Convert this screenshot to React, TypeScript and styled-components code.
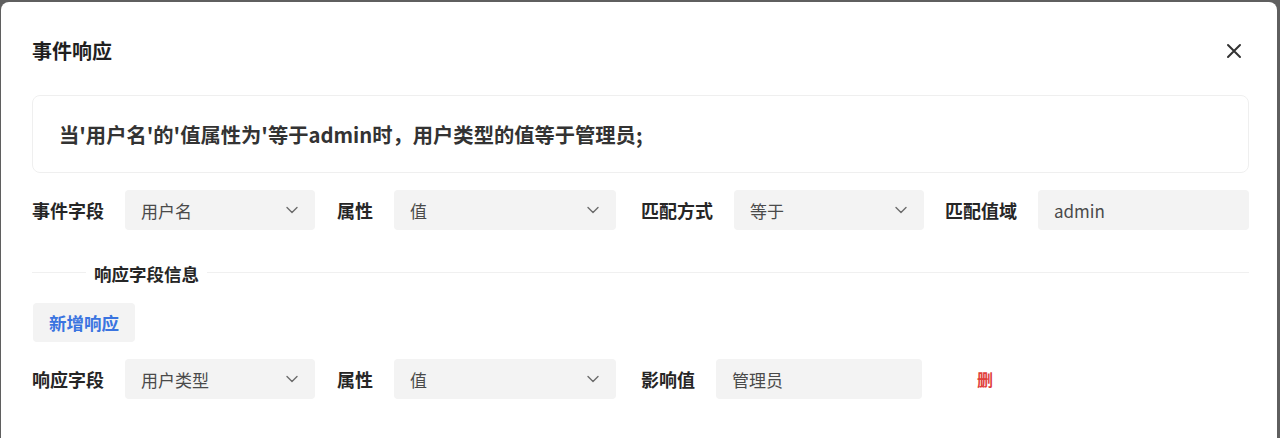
import styled, { createGlobalStyle } from 'styled-components';

const GlobalStyle = createGlobalStyle`
  html, body {
    margin: 0;
    padding: 0;
    background: #5f5f5f;
    overflow: hidden;
  }
  body {
    font-family: "Noto Sans CJK SC", "Noto Sans", "Liberation Sans", sans-serif;
    color: #262626;
  }
`;

const Modal = styled.div`
  margin: 2px 3px 0 1px;
  height: 436px;
  background: #ffffff;
  border-radius: 8px 8px 0 0;
  padding: 36px 28px 0 31px;
  box-sizing: border-box;
  display: flex;
  flex-direction: column;
  overflow: hidden;
`;

const Header = styled.div`
  display: flex;
  align-items: center;
  justify-content: space-between;
  height: 26px;
`;

const Title = styled.h2`
  margin: 0;
  font-size: 20px;
  font-weight: 700;
  line-height: 26px;
  color: #1f1f1f;
`;

const CloseButton = styled.button`
  border: none;
  background: transparent;
  padding: 0;
  width: 20px;
  height: 20px;
  margin-right: 5px;
  display: flex;
  align-items: center;
  justify-content: center;
  cursor: pointer;
`;

const Summary = styled.div`
  margin-top: 31px;
  height: 78px;
  flex-shrink: 0;
  border: 1px solid #efefef;
  border-radius: 8px;
  box-sizing: border-box;
  padding: 0 26px;
  display: flex;
  align-items: center;
  font-size: 20.3px;
  font-weight: 700;
  color: #333333;
`;

const Row = styled.div<{ $top: number }>`
  margin-top: ${(p) => p.$top}px;
  display: flex;
  align-items: center;
  height: 40px;
  flex-shrink: 0;
`;

const Label = styled.span<{ $gap?: number }>`
  font-size: 18px;
  font-weight: 700;
  color: #262626;
  white-space: nowrap;
  margin-right: 21px;
  margin-left: ${(p) => p.$gap ?? 0}px;
`;

const Field = styled.div<{ $w: number }>`
  width: ${(p) => p.$w}px;
  height: 40px;
  background: #f3f3f3;
  border-radius: 4px;
  box-sizing: border-box;
  padding: 0 16px 0 16px;
  display: flex;
  align-items: center;
  justify-content: space-between;
  font-size: 17px;
  color: #4a4a4a;
`;

const DividerWrap = styled.div`
  margin-top: 30px;
  display: flex;
  align-items: center;
  height: 24px;
  flex-shrink: 0;
  &::before,
  &::after {
    content: '';
    height: 1px;
    background: #f0f0f0;
  }
  &::before {
    width: 54px;
  }
  &::after {
    flex: 1;
  }
`;

const DividerText = styled.span`
  padding: 4px 8px 0;
  font-size: 17.5px;
  font-weight: 700;
  color: #262626;
  line-height: 24px;
`;

const AddButton = styled.button`
  margin-top: 19px;
  align-self: flex-start;
  margin-left: 1px;
  width: 102px;
  height: 39px;
  flex-shrink: 0;
  border: none;
  border-radius: 4px;
  background: #f3f3f3;
  color: #3a74e0;
  font-family: inherit;
  font-size: 17.5px;
  font-weight: 700;
  cursor: pointer;
`;

const DeleteLink = styled.span`
  margin-left: 55px;
  color: #e0403a;
  font-size: 16px;
  font-weight: 700;
  cursor: pointer;
`;

function Chevron() {
  return (
    <svg width="14" height="14" viewBox="0 0 14 14" fill="none">
      <path d="M2 4.5 L7 9.5 L12 4.5" stroke="#6b6b6b" strokeWidth="1.4" strokeLinecap="round" strokeLinejoin="round" />
    </svg>
  );
}

function CloseIcon() {
  return (
    <svg width="16" height="16" viewBox="0 0 16 16" fill="none">
      <path d="M2 2 L14 14 M14 2 L2 14" stroke="#333" strokeWidth="2" strokeLinecap="round" />
    </svg>
  );
}

function Select({ value, width }: { value: string; width: number }) {
  return (
    <Field $w={width}>
      <span>{value}</span>
      <Chevron />
    </Field>
  );
}

function Input({ value, width }: { value: string; width: number }) {
  return (
    <Field $w={width}>
      <span>{value}</span>
    </Field>
  );
}

export default function App() {
  return (
    <>
      <GlobalStyle />
      <Modal>
        <Header>
          <Title>事件响应</Title>
          <CloseButton aria-label="close">
            <CloseIcon />
          </CloseButton>
        </Header>
        <Summary>当'用户名'的'值属性为'等于admin时，用户类型的值等于管理员;</Summary>
        <Row $top={17}>
          <Label>事件字段</Label>
          <Select value="用户名" width={190} />
          <Label $gap={22}>属性</Label>
          <Select value="值" width={222} />
          <Label $gap={25}>匹配方式</Label>
          <Select value="等于" width={190} />
          <Label $gap={21}>匹配值域</Label>
          <Input value="admin" width={211} />
        </Row>
        <DividerWrap>
          <DividerText>响应字段信息</DividerText>
        </DividerWrap>
        <AddButton>新增响应</AddButton>
        <Row $top={17}>
          <Label>响应字段</Label>
          <Select value="用户类型" width={190} />
          <Label $gap={22}>属性</Label>
          <Select value="值" width={222} />
          <Label $gap={25}>影响值</Label>
          <Input value="管理员" width={206} />
          <DeleteLink>删</DeleteLink>
        </Row>
      </Modal>
    </>
  );
}
